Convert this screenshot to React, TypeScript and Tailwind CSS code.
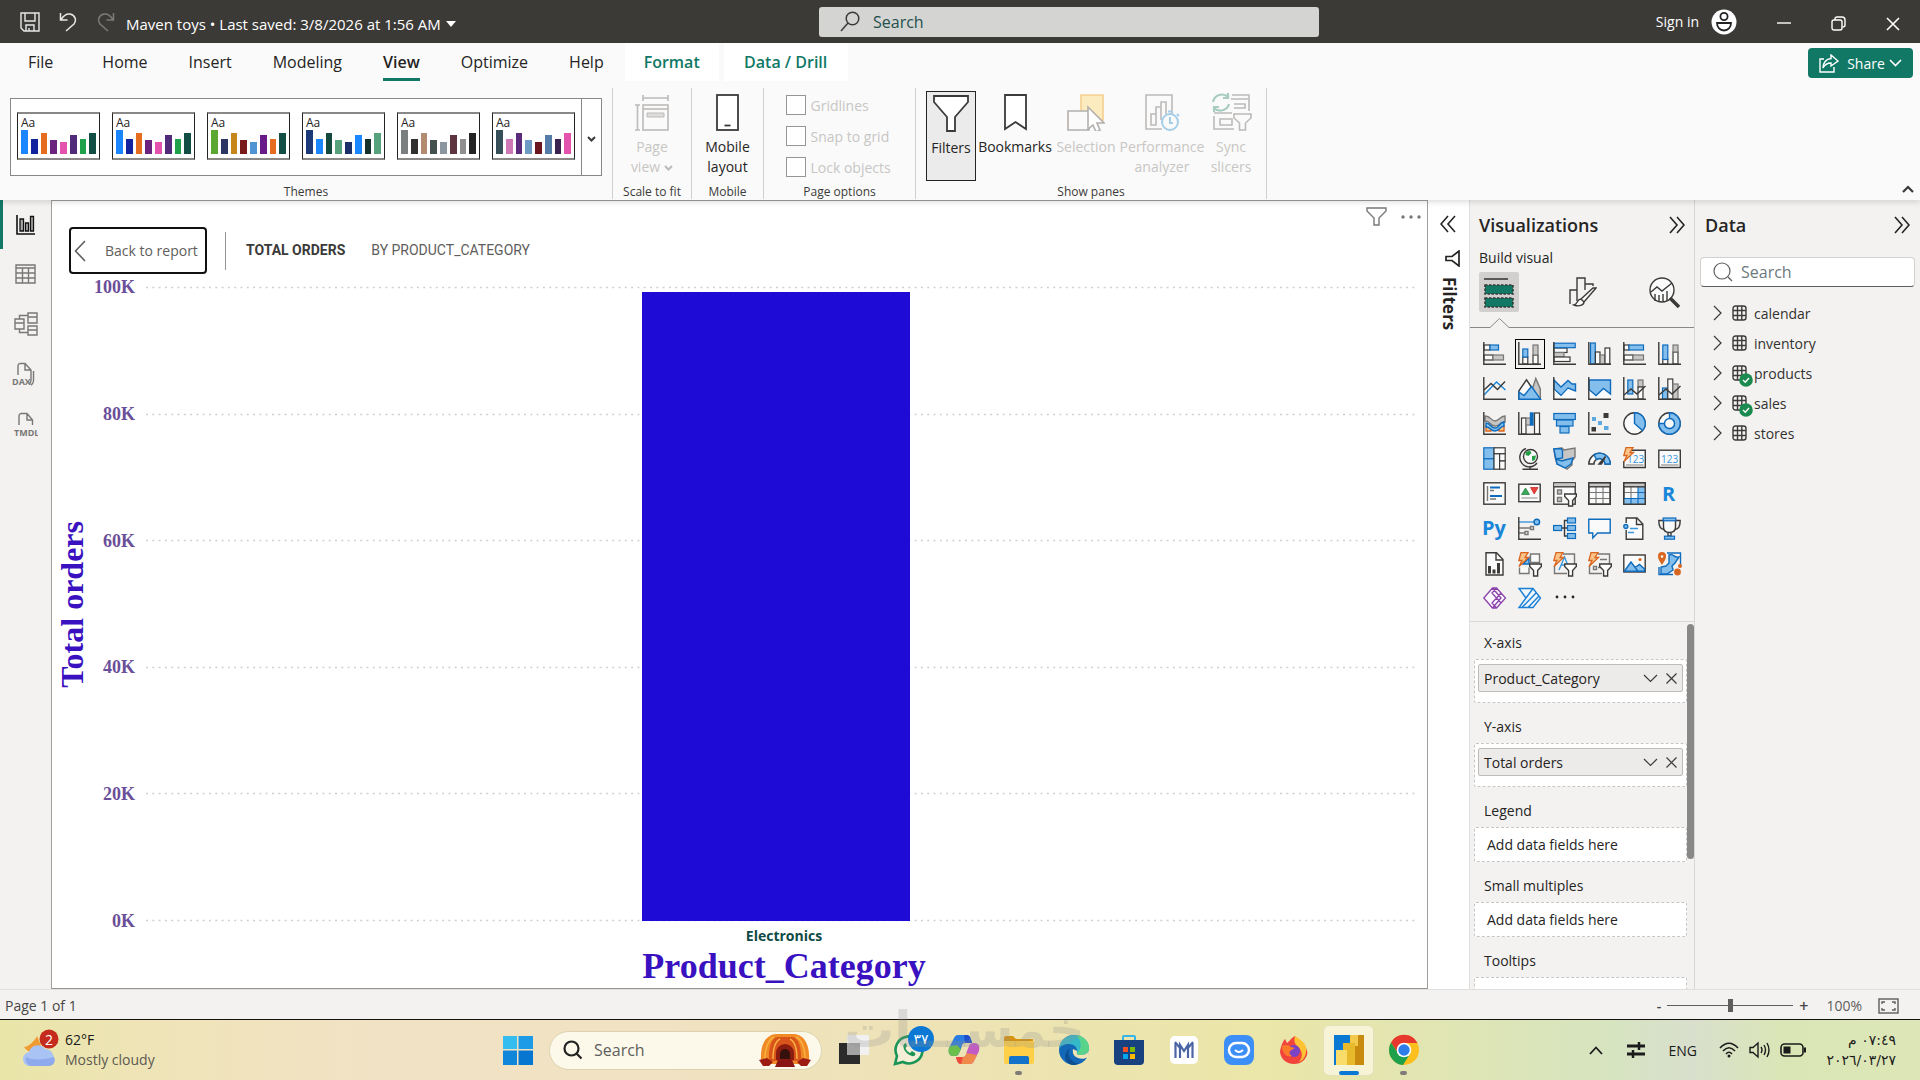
import { ReactNode } from "react";

const DARK = "#3b3a39";
const BLUE = "#0f6cbd";
const LIGHT = "#83beec";
const GRAY = "#797775";
const SILVER = "#c8c6c4";
const WHITE = "#fafafa";
const ORANGE = "#d9661f";

type SvgProps = {
  w?: number;
  h?: number;
  className?: string;
  color?: string;
  sw?: number;
  children: ReactNode;
};

function Svg({ w = 23, h = 23, className = "", color = DARK, sw = 1.4, children }: SvgProps) {
  return (
    <svg
      width={w}
      height={h}
      viewBox={`0 0 ${w} ${h}`}
      fill="none"
      stroke={color}
      strokeWidth={sw}
      className={`shrink-0 ${className}`}
      aria-hidden="true"
    >
      {children}
    </svg>
  );
}

// Small building blocks shared by the visual icons
const Axis = () => <path d="M.8 0V22.2H23" />;

const R = ({ x, y, w, h, c }: { x: number; y: number; w: number; h: number; c: "b" | "g" | "w" }) => (
  <rect
    x={x}
    y={y}
    width={w}
    height={h}
    fill={c === "b" ? LIGHT : c === "g" ? SILVER : WHITE}
    stroke={c === "b" ? BLUE : c === "g" ? GRAY : DARK}
    strokeWidth={1.2}
  />
);

const Bolt = () => (
  <path d="M3 .7H10L7 5.5H10.5L1 14.5L4 8.5H.8Z" fill="#fbc58a" stroke={ORANGE} strokeWidth={1.3} />
);

const MiniFunnel = () => (
  <path d="M11.7 12H23.3V14.5L19.6 18.5V24H15.6V18.5L11.7 14.5Z" fill="#fff" stroke={DARK} strokeWidth={1.4} />
);

const visuals: { name: string; icon: ReactNode }[] = [
  {
    name: "Stacked bar chart",
    icon: <><R x={1} y={3} w={6} h={5} c="w" /><R x={7} y={3} w={8.5} h={5} c="b" /><R x={1} y={13} w={9} h={5} c="w" /><R x={10} y={13} w={10.5} h={5} c="g" /><Axis /></>,
  },
  {
    name: "Stacked column chart",
    icon: <><R x={4.8} y={15} w={5} h={7} c="w" /><R x={4.8} y={7} w={5} h={8} c="b" /><R x={15} y={13} w={5} h={9} c="w" /><R x={15} y={3} w={5} h={10} c="g" /><Axis /></>,
  },
  {
    name: "Clustered bar chart",
    icon: <><R x={1} y={6} w={13} h={4.5} c="w" /><R x={1} y={10.5} w={10} h={4.5} c="g" /><R x={1} y={15} w={16} h={4.5} c="w" /><R x={1} y={1.2} w={21.2} h={4.5} c="b" /><Axis /></>,
  },
  {
    name: "Clustered column chart",
    icon: <><R x={2.5} y={1} w={4.8} h={21} c="b" /><R x={7.4} y={10} w={4.6} h={12} c="w" /><R x={12.2} y={13} w={4.6} h={9} c="g" /><R x={17} y={6} w={4.8} h={16} c="w" /><Axis /></>,
  },
  {
    name: "100% stacked bar chart",
    icon: <><R x={1} y={3} w={5} h={5} c="w" /><R x={6} y={3} w={14.5} h={5} c="b" /><R x={1} y={13} w={9} h={5} c="w" /><R x={10} y={13} w={10.5} h={5} c="g" /><Axis /></>,
  },
  {
    name: "100% stacked column chart",
    icon: <><R x={4.8} y={17} w={5} h={5} c="w" /><R x={4.8} y={3} w={5} h={14.5} c="b" /><R x={15} y={10} w={5} h={12} c="w" /><R x={15} y={3} w={5} h={7} c="g" /><Axis /></>,
  },
  {
    name: "Line chart",
    icon: <><path d="M1 18L13.5 5L22.5 13" stroke="#1a86d9" /><path d="M1 13L8 6.5L14.5 12.5L22 4.5" /><Axis /></>,
  },
  {
    name: "Area chart",
    icon: <><path d="M11 22L17.8 1.5L22.3 12V22Z" fill={SILVER} stroke={GRAY} /><path d="M.8 22V14L8.5 2.8L16 14V22Z" fill={WHITE} /><path d="M1 22.2V15L6 18.5L13.5 9.5L22.5 22.2Z" fill={LIGHT} stroke={BLUE} /></>,
  },
  {
    name: "Stacked area chart",
    icon: <><path d="M1 3L8 10L15 3.5L19 7H22.5V14L15 11L8 18.5L1 12Z" fill={LIGHT} stroke={BLUE} /><path d="M1 13L8 19.5L15 12L22.5 15.5V22H1Z" fill={WHITE} stroke="none" /><Axis /></>,
  },
  {
    name: "100% stacked area chart",
    icon: <><rect x="1" y="3" width="22" height="19" fill={WHITE} stroke="none" /><path d="M1 3H22.5V17L15.5 11.5L8 18.5L1 12.5Z" fill={LIGHT} stroke={BLUE} /><Axis /></>,
  },
  {
    name: "Line and stacked column chart",
    icon: <><R x={4.8} y={3} w={5} h={14} c="b" /><R x={15} y={3} w={5} h={7} c="g" /><R x={15} y={10} w={5} h={12} c="w" /><path d="M1 18L8 12L14 17L22.5 9" /><Axis /></>,
  },
  {
    name: "Line and clustered column chart",
    icon: <><R x={4.5} y={11} w={5} h={11} c="b" /><R x={9.8} y={2} w={5} h={20} c="w" /><R x={15} y={7} w={5} h={15} c="g" /><path d="M1 18L8 12L14 17L22.5 9" /><Axis /></>,
  },
  {
    name: "Ribbon chart",
    icon: <><path d="M2 4C8 4 8 9 12 9S17 4 22 4V10C17 10 17 14 12 14S8 9 2 9Z" fill={SILVER} stroke={GRAY} /><path d="M3 14H8V19H3ZM16 14H21V19H16Z" fill="#fbc58a" stroke={ORANGE} /><path d="M3 11C8 11 7 16 12 16S16 10 21 10V14C17 14 17 19 12 19S8 15 3 15Z" fill={LIGHT} stroke={BLUE} /><Axis /></>,
  },
  {
    name: "Waterfall chart",
    icon: <><R x={3.5} y={6} w={4.5} h={16} c="w" /><R x={8} y={6} w={4.5} h={7} c="g" /><rect x="12.5" y="1" width="2.5" height="12" fill={BLUE} stroke={BLUE} /><R x={16.5} y={1} w={5} h={21} c="w" /><Axis /></>,
  },
  {
    name: "Funnel chart",
    icon: <><R x={.8} y={1.5} w={21.5} h={6} c="b" /><R x={3.5} y={8} w={16.5} h={6} c="b" /><R x={7} y={14.5} w={9} h={6.5} c="b" /></>,
  },
  {
    name: "Scatter chart",
    icon: <><g stroke="none"><rect x="15.5" y="1" width="5" height="5" fill={DARK} /><rect x="3.5" y="15" width="4.5" height="4.5" fill={DARK} /><rect x="4" y="5" width="4" height="4" fill="#5ea9e0" /><rect x="10" y="9" width="4" height="4" fill="#5ea9e0" /><rect x="16" y="14" width="4.5" height="4" fill="#5ea9e0" /></g><Axis /></>,
  },
  {
    name: "Pie chart",
    icon: <><circle cx="11.5" cy="11.5" r="10.7" fill={WHITE} /><path d="M11.5 .8A10.7 10.7 0 0 1 19.5 18.6L11.5 11.5Z" fill={LIGHT} stroke={BLUE} /></>,
  },
  {
    name: "Donut chart",
    icon: <><circle cx="11.5" cy="11.5" r="10.7" fill={WHITE} /><path d="M11.5 .8A10.7 10.7 0 1 1 .8 11.5H6.5A5 5 0 1 0 11.5 6.5Z" fill={LIGHT} stroke={BLUE} /><circle cx="11.5" cy="11.5" r="5" fill={WHITE} stroke={BLUE} /></>,
  },
  {
    name: "Treemap",
    icon: <><R x={.8} y={.8} w={10.2} h={11} c="b" /><R x={.8} y={11.8} w={10.2} h={10.4} c="b" /><R x={11} y={.8} w={11.2} h={6} c="w" /><R x={11} y={6.8} w={5.6} h={15.4} c="w" /><R x={16.6} y={6.8} w={5.6} h={7.2} c="w" /><R x={16.6} y={14} w={5.6} h={8.2} c="w" /></>,
  },
  {
    name: "Map",
    icon: <><path d="M8 1.5A9.5 9.5 0 1 0 19 16M12 19V22M4.5 22.2H20" /><circle cx="12.5" cy="9.5" r="7" fill={WHITE} /><path d="M8 5L12 3.5L13.5 6L10.5 9L7.5 8ZM14 9L18 8.5L17 13L14 14Z" fill="#22a045" stroke="none" /></>,
  },
  {
    name: "Filled map",
    icon: <><path d="M.8 2L9 1L11 3L22 1V10L19 14V18L14 22L10 19L4 17L2 10Z" fill={SILVER} stroke={GRAY} /><path d="M.8 2L8 1.5L9.5 4V11L3 12Z" fill={LIGHT} stroke={BLUE} /><path d="M12 13L20 11L18 17L12 21L4 17L3 12L9 14Z" fill={LIGHT} stroke={BLUE} /></>,
  },
  {
    name: "Gauge",
    icon: <><path d="M.8 17A10.7 10.7 0 0 1 22.2 17H17A5.5 5.5 0 0 0 6 17Z" fill={WHITE} /><path d="M6 7.8A10.7 10.7 0 0 1 22.2 17H17A5.5 5.5 0 0 0 8.5 12.5Z" fill={LIGHT} stroke={BLUE} /><path d="M11 17L17.5 9.5L13.5 17Z" fill={DARK} /></>,
  },
  {
    name: "Card (new)",
    icon: <><path d="M8 3.2H22.3V20.5H.8V14" fill={WHITE} /><path d="M3 18H20.5" stroke="#bbb" strokeWidth="2" /><text x="4" y="15.5" fontSize="10" fill="#3a96dd" stroke="none" className="font-['Open_Sans',sans-serif]">123</text><Bolt /></>,
  },
  {
    name: "Card",
    icon: <><rect x=".8" y="3.2" width="21.5" height="17.3" fill={WHITE} /><path d="M3 18H20.5" stroke="#bbb" strokeWidth="2" /><text x="3" y="15.5" fontSize="10" fill="#3a96dd" stroke="none" className="font-['Open_Sans',sans-serif]">123</text></>,
  },
  {
    name: "Multi-row card",
    icon: <><rect x=".8" y=".8" width="21.4" height="21.4" fill={WHITE} /><path d="M4.5 4V19M7 8.5H11M7 17H13" stroke={GRAY} /><path d="M7 5.5H17M7 14H19" stroke={BLUE} strokeWidth="2" /></>,
  },
  {
    name: "KPI",
    icon: <><rect x=".8" y="2.2" width="21.4" height="17.5" fill={WHITE} /><path d="M3.5 12.5L7.5 6L11.5 12.5Z" fill="#3aa75a" stroke="#2a8547" strokeWidth=".8" /><path d="M12.5 5.5H20L16.2 12Z" fill="#e8403a" stroke="#c82d28" strokeWidth=".8" /><path d="M3.5 16H19.5" stroke="#aaa" /></>,
  },
  {
    name: "Slicer",
    icon: <><rect x=".8" y=".8" width="21.4" height="21.4" fill={WHITE} /><path d="M1 2.8H22" stroke={SILVER} strokeWidth="2.6" /><path d="M.8 4.8H22.2" /><path d="M4.5 8H8.5V12H4.5ZM4.5 15.5H8.5V19.5H4.5Z" fill={SILVER} stroke={GRAY} /><MiniFunnel /></>,
  },
  {
    name: "Table",
    icon: <><rect x=".8" y=".8" width="21.4" height="21.4" fill={WHITE} /><path d="M1 2.8H22" stroke={SILVER} strokeWidth="2.6" /><path d="M.8 10.5H22M.8 16.5H22M8 5V22M15 5V22" stroke={GRAY} strokeWidth="1.1" /><path d="M.8 4.8H22.2" /><rect x=".8" y=".8" width="21.4" height="21.4" /></>,
  },
  {
    name: "Matrix",
    icon: <><rect x=".8" y=".8" width="21.4" height="21.4" fill={WHITE} /><path d="M1 2.8H22" stroke={SILVER} strokeWidth="2.6" /><path d="M1 16.5H15V5H22V22H1Z" fill={LIGHT} stroke="none" /><path d="M.8 10.5H15M8 5V16.5" stroke={GRAY} strokeWidth="1.1" /><path d="M15 5V22M8 16.5V22M15 10.5H22M1 16.5H22" stroke={BLUE} strokeWidth="1.1" /><path d="M.8 4.8H22.2" /><rect x=".8" y=".8" width="21.4" height="21.4" /></>,
  },
  {
    name: "R script visual",
    icon: <text x="4" y="19" fontSize="20" fontWeight="700" fill="#1a86d9" stroke="none" className="font-['Open_Sans',sans-serif]">R</text>,
  },
  {
    name: "Python visual",
    icon: <text x="-1" y="17.5" fontSize="20" fontWeight="700" fill="#1a86d9" stroke="none" className="font-['Open_Sans',sans-serif]">Py</text>,
  },
  {
    name: "Key influencers",
    icon: <><path d="M1 5H16" stroke="#3a96dd" /><circle cx="18.8" cy="5" r="2.8" fill={LIGHT} stroke={BLUE} /><path d="M1 11H12M1 16H7M12.5 9.5H15.5V12.5H12.5ZM7 14.5H10V17.5H7Z" stroke={GRAY} /><Axis /></>,
  },
  {
    name: "Decomposition tree",
    icon: <><path d="M8 11H15M11.5 11V3.5H15M11.5 11V19H15" /><R x={.6} y={8.5} w={8} h={5} c="b" /><R x={14.5} y={1} w={8} h={5} c="b" /><R x={14.5} y={8.5} w={8} h={5} c="b" /><R x={14.5} y={16.5} w={8} h={5} c="b" /></>,
  },
  {
    name: "Q&A",
    icon: <path d="M.8 2.2H22.2V16H9.5L4.8 21V16H.8Z" fill={WHITE} stroke={BLUE} />,
  },
  {
    name: "Narrative",
    icon: <><path d="M3.2 6V1H14L19.8 7V22.2H3.2V13" fill={WHITE} /><path d="M13.5 1V7.5H19.8" /><path d="M7 11.5H15M5 15.5H11" stroke="#3a96dd" /><circle cx="2.8" cy="9.5" r="2" fill={LIGHT} stroke={BLUE} /></>,
  },
  {
    name: "Goals",
    icon: <><path d="M5 3.5H.8C.8 9 3 12.5 6.5 12.5M18 3.5H22.2C22.2 9 20 12.5 16.5 12.5" /><path d="M5.5 3V10C5.5 14 8 15.5 11.5 15.5S17.5 14 17.5 10V3Z" fill={WHITE} /><path d="M10 15.5V19H13V15.5" /><R x={5.2} y={1} w={12.6} h={2.8} c="b" /><R x={6.5} y={19.2} w={10} h={3} c="b" /></>,
  },
  {
    name: "Paginated report",
    icon: <><path d="M3 .8H13.5L20 7.5V23H3Z" fill={WHITE} /><path d="M13 1V8H20" /><path d="M5 21.5V14H8V21.5ZM9.5 21.5V17.5H12.5V21.5ZM14 21.5V11H17V21.5Z" fill={DARK} stroke="none" /></>,
  },
  {
    name: "Button slicer",
    icon: <><path d="M12.5 2H21.5V10.5H12.5ZM1.5 15.5V21.5H11V15.5" fill={WHITE} stroke={GRAY} /><path d="M5 12L11 6V12Z" fill={LIGHT} stroke={BLUE} /><Bolt /><MiniFunnel /></>,
  },
  {
    name: "Text slicer",
    icon: <><path d="M10 2H21.5V12M1.5 14V21.5H14" stroke={GRAY} /><path d="M6 18L11.5 5L16 16M8 13H14" stroke="#3a96dd" /><Bolt /><MiniFunnel /></>,
  },
  {
    name: "List slicer",
    icon: <><path d="M10 2H21.5V12M1.5 14V21.5H14" stroke={GRAY} /><path d="M12 7.5H19M10 15.5H13M5.5 14.5H8.5V17.5H5.5Z" stroke={GRAY} /><Bolt /><MiniFunnel /></>,
  },
  {
    name: "Image",
    icon: <><rect x=".8" y="3" width="21.4" height="17" fill={WHITE} /><path d="M1.5 19L8 10L15 19.3ZM12 15.5L16.5 12.5L21.5 17V19.3H15Z" fill={LIGHT} stroke={BLUE} /><circle cx="17" cy="7.5" r="1.6" fill={ORANGE} stroke="none" /></>,
  },
  {
    name: "Azure map",
    icon: <><path d="M9 1H22.5V13M1 15V22.5H15" stroke={BLUE} /><path d="M11 3C16 1 15 6 21 5L17 11L14 14L15 18L9 22H3V15L8 14L11 11Z" fill={LIGHT} stroke={BLUE} /><path d="M4 0A4 4 0 0 1 8 4C8 8 5 11 4 13C3 11 0 8 0 4A4 4 0 0 1 4 0Z" fill={ORANGE} stroke="none" /><circle cx="4" cy="4.5" r="1.3" fill="#fff" stroke="none" /><circle cx="19.5" cy="20" r="3.4" fill={ORANGE} stroke="none" /><circle cx="22" cy="14" r="2" fill={ORANGE} stroke="none" /></>,
  },
  {
    name: "Power Apps",
    icon: <path d="M9.5 1H13.5L22.5 11L13.5 21H9.5L.8 11ZM9.5 1L18 11L9.5 21M13.5 1L9 6L18 16M18 6L9 16L13.5 21" stroke="#8c42ab" strokeWidth="1.3" fill="#fbf6fd" />,
  },
  {
    name: "Power Automate",
    icon: <path d="M1 1.5H15L22.5 11L15 20.5H1L8 11ZM8 11L15 1.5M4 20.5L18.5 5.5M10 20.5L21 9" stroke="#1a7fd4" strokeWidth="1.4" fill="#eef6fd" />,
  },
];

const themes = [
  ["#1a86ff", "#12239e", "#e66c1f", "#6b2380", "#e352ad", "#512a7a", "#1fa04a", "#134e45"],
  ["#1a86ff", "#12239e", "#e66c1f", "#6b2380", "#e352ad", "#512a7a", "#1fa04a", "#134e45"],
  ["#5aa832", "#2c3564", "#c7861c", "#7a1b1b", "#4f95d4", "#6a1b8a", "#e66c1f", "#134e45"],
  ["#1c3a78", "#1a86ff", "#14493f", "#55a27c", "#1b2f6b", "#1a86ff", "#16312c", "#55a27c"],
  ["#7b7f7f", "#303030", "#b38b70", "#44504d", "#8a97a0", "#5d3440", "#8f8f8f", "#242424"],
  ["#364f59", "#cf78b6", "#5b2a7a", "#6d9bc4", "#6b151f", "#557ba8", "#3a2150", "#e352ad"],
];
const barHeights = [24, 15, 21, 14, 12, 19, 15, 21];

const ticks = ["100K", "80K", "60K", "40K", "20K", "0K"];

const tables = [
  { name: "calendar", used: false },
  { name: "inventory", used: false },
  { name: "products", used: true },
  { name: "sales", used: true },
  { name: "stores", used: false },
];

function DoubleChevron({ left = false }: { left?: boolean }) {
  return (
    <Svg w={17} h={18} color="#252423" sw={1.6}>
      <path d={left ? "M8 1L1 9L8 17M15 1L8 9L15 17" : "M2 1L9 9L2 17M9 1L16 9L9 17"} />
    </Svg>
  );
}

function TitleBar() {
  return (
    <header className="flex h-[43px] shrink-0 items-center bg-[#3b3a37] text-white">
      <div className="flex flex-[819] items-center">
        <button aria-label="Save" className="ml-5 mr-[19px]">
          <Svg w={20} h={20} color="#e8e8e8"><path d="M1 1H19V19H4L1 16ZM5 1V9H15V1M6 19V13H14V19M9 16V19" /></Svg>
        </button>
        <button aria-label="Undo" className="mr-5">
          <Svg w={18} h={20} color="#e8e8e8" sw={1.5}><path d="M1.5 1V8H8.5M2 7.5C5 3 8 1.5 11 2C16 3 18 8 15 12L7 19" /></Svg>
        </button>
        <button aria-label="Redo" className="mr-[11px]" disabled>
          <Svg w={18} h={20} color="#7c7b79" sw={1.5}><path d="M16.5 1V8H9.5M16 7.5C13 3 10 1.5 7 2C2 3 0 8 3 12L11 19" /></Svg>
        </button>
        <button className="flex items-center gap-1 whitespace-nowrap pt-[5px] text-[15px]">
          Maven toys • Last saved: 3/8/2026 at 1:56 AM
          <Svg w={12} h={7}><path d="M1 0H11L6 6Z" fill="#fff" stroke="none" /></Svg>
        </button>
      </div>
      <label className="flex h-[30px] w-[500px] items-center gap-3 rounded-[3px] bg-[#d4d4d2] pl-5">
        <Svg w={22} h={22} color={DARK} sw={1.5}><circle cx="13.5" cy="7.5" r="6.3" /><path d="M9 12L2 20" /></Svg>
        <input placeholder="Search" aria-label="Search" className="w-full bg-transparent text-[16px] outline-none placeholder:text-[#24504d]" />
      </label>
      <div className="flex flex-[601] items-center justify-end">
        <button className="flex items-center gap-3 text-[14px]">
          Sign in
          <Svg w={26} h={26} color="#222" sw={1.8}><circle cx="13" cy="13" r="12.5" fill="#fff" stroke="none" /><circle cx="13" cy="7.5" r="3.6" /><path d="M6 14H20C20 18.500 17 21.500 13 21.500S6 18.500 6 14Z" /></Svg>
        </button>
        <button aria-label="Minimize" className="ml-10"><Svg w={14} h={14} color="#fff"><path d="M0 8H14" /></Svg></button>
        <button aria-label="Restore" className="ml-10 pt-1"><Svg w={15} h={15} color="#fff"><rect x="1" y="4" width="10" height="10" rx="2" /><path d="M4 4V3Q4 1 6 1H11Q14 1 14 4V9Q14 11 11.500 11" /></Svg></button>
        <button aria-label="Close" className="ml-10 mr-5 pt-1"><Svg w={14} h={14} color="#fff" sw={1.6}><path d="M1 1L13 13M13 1L1 13" /></Svg></button>
      </div>
    </header>
  );
}

const tabs = ["Home", "Insert", "Modeling", "View", "Optimize", "Help"];

function TabRow() {
  return (
    <nav className="flex h-[45px] items-start gap-px text-[16px] text-[#252423]">
      <button className="ml-2 mr-2 h-[38px] px-5">File</button>
      {tabs.map((t) =>
        t === "View" ? (
          <button key={t} className="flex h-[38px] flex-col items-center px-5 font-semibold">
            <span className="box-content flex h-[35px] items-center border-b-[3px] border-[#117865] pt-[2px]">{t}</span>
          </button>
        ) : (
          <button key={t} className="h-[38px] px-5">{t}</button>
        )
      )}
      <button className="h-[38px] w-[94px] bg-white font-semibold text-[#117865]">Format</button>
      <button className="ml-1 h-[38px] w-[124px] bg-white font-semibold text-[#117865]">Data / Drill</button>
      <button className="ml-auto mr-[7px] mt-[5px] flex h-[30px] w-[105px] items-center justify-center gap-2 rounded-[4px] bg-[#117865] text-[14px] font-medium text-white">
        <Svg w={20} h={19} color="#fff"><path d="M5 5H1V18H15V13" /><path d="M12 1L19 7L12 12V9C8 9 6 10 4 14C4 9 7 5 12 4.500Z" /></Svg>
        <span className="flex items-center gap-1">Share<Svg w={13} h={8} color="#fff" sw={1.6}><path d="M1 1L6.500 6.500L12 1" /></Svg></span>
      </button>
    </nav>
  );
}

function Group({ label, className = "", children }: { label: string; className?: string; children: ReactNode }) {
  return (
    <section className={`flex h-[111px] flex-col border-r border-[#d2d0ce] ${className}`}>
      <div className="flex flex-1 justify-center">{children}</div>
      <h2 className="h-[16px] text-center text-[12px] leading-[18px] text-[#3b3a39]">{label}</h2>
    </section>
  );
}

function Tool({ label, icon, className, off = false }: { label: ReactNode; icon: ReactNode; className: string; off?: boolean }) {
  return (
    <button disabled={off} className={`flex h-[90px] flex-col items-center gap-[4px] text-[14px] leading-[20px] ${off ? "text-[#c8c6c4]" : "text-[#252423]"} ${className}`}>
      <span className="flex h-[42px] items-center">{icon}</span>
      <span className="text-center">{label}</span>
    </button>
  );
}

function Ribbon() {
  return (
    <div className="relative z-10 flex h-[157px] shrink-0 flex-col bg-[#fafafa] shadow-[0_2px_6px_rgba(0,0,0,0.14)]">
      <TabRow />
      <div className="flex">
        <Group label="Themes" className="w-[613px]">
          <div className="mt-[10px] flex h-[78px] w-[592px] border border-[#8a8886] bg-white">
            <div className="flex flex-1 gap-3 pl-[6px] pt-[13px]">
              {themes.map((colors, i) => (
                <button key={i} aria-label={`Theme ${i + 1}`} className="flex h-[48px] w-[83px] flex-col justify-between border border-y-2 border-[#252423] border-y-[#8a8886] px-[3px] pb-1 text-left">
                  <span className="h-[16px] text-[12px] leading-[17px] text-[#252423]">Aa</span>
                  <span className="flex items-end gap-[3px]">
                    {colors.map((c, j) => (
                      <span key={j} className="w-[7px]" style={{ background: c, height: barHeights[j] }} />
                    ))}
                  </span>
                </button>
              ))}
            </div>
            <button aria-label="More themes" className="flex w-[20px] items-center justify-center border-l border-[#8a8886] pt-1">
              <Svg w={9} h={6} sw={2}><path d="M1 1L4.500 4.500L8 1" /></Svg>
            </button>
          </div>
        </Group>
        <Group label="Scale to fit" className="w-[79px]">
          <Tool
            off
            className="mt-[3px] w-[60px]"
            icon={<Svg w={36} h={37} color="#bdbbb9" sw={1.6}><path d="M9 1V7M34 1V7M9 4H34M1 11H6M1 36H6M3.500 11V36" /><rect x="9" y="11" width="25" height="25" /><path d="M9 15H34" /><path d="M13 19H30V23H13Z" fill="#dedcda" strokeWidth="1" /></Svg>}
            label={<>Page<br />view<Svg w={9} h={6} sw={2} color="#bdbbb9" className="ml-1 inline"><path d="M1 1L4.500 4.500L8 1" /></Svg></>}
          />
        </Group>
        <Group label="Mobile" className="w-[72px]">
          <Tool
            className="mt-[3px] w-[60px]"
            icon={<Svg w={23} h={37} sw={1.8}><rect x="1" y="1" width="21" height="35" fill="#fff" /><path d="M8.500 31.500H14.500" /></Svg>}
            label={<>Mobile<br />layout</>}
          />
        </Group>
        <Group label="Page options" className="w-[152px]">
          <div className="flex w-[108px] flex-col gap-[11px] pt-[7px] text-[14px] text-[#c8c6c4]">
            {["Gridlines", "Snap to grid", "Lock objects"].map((t) => (
              <label key={t} className="flex h-5 items-center gap-[5px] whitespace-nowrap">
                <input type="checkbox" disabled className="h-5 w-5 shrink-0 appearance-none border border-[#979593] bg-white" />
                {t}
              </label>
            ))}
          </div>
        </Group>
        <Group label="Show panes" className="w-[351px]">
          <div className="flex pt-[3px]">
            <Tool className="w-[50px] border border-[#252423] bg-[#ebebeb]" icon={<Svg w={36} h={37} sw={1.8}><path d="M1 1H35V7L22 22V36H14V22L1 7Z" fill="#fff" /></Svg>} label="Filters" />
            <Tool className="w-[78px]" icon={<Svg w={23} h={37} sw={1.8}><path d="M1 1H22V35L11.500 28L1 35Z" fill="#fff" /></Svg>} label="Bookmarks" />
            <Tool
              off
              className="w-[64px]"
              icon={<Svg w={38} h={37} color="#b3b0ad" sw={1.6}><path d="M14 1H36V26H14Z" fill="#fdebc0" stroke="#f5d08f" /><path d="M1 17H22V36H1Z" fill="#fafafa" /><path d="M21 13L37 29H30L33 36L29 38L26 31L21 35Z" fill="#fff" /></Svg>}
              label="Selection"
            />
            <Tool
              off
              className="w-[88px]"
              icon={<Svg w={36} h={37} color="#bdbbb9" sw={1.6}><path d="M28 20V1H2V35H18M7 31V20H12V31ZM12 20V13H17V8H22V20M17 13V26" /><circle cx="26" cy="28" r="8" fill="#fafafa" stroke="#a5cdea" strokeWidth="2" /><path d="M26 23V29H29M24 17.500H28M33 20L35 22" stroke="#a5cdea" strokeWidth="2" /></Svg>}
              label={<>Performance<br />analyzer</>}
            />
            <Tool
              off
              className="w-[50px]"
              icon={<Svg w={42} h={40} color="#bdbbb9" sw={1.6}><path d="M22 3H39V19M21 7H39M4 24V37H24M10 27H22V33H10ZM4 21H22M24 12H35V16H24" /><path d="M24 22H41V26L35.500 31V38H29.500V31L24 26Z" fill="#fafafa" /><path d="M3 10A9 9 0 0 1 18 5V1M18 6H13M19 12A9 9 0 0 1 4 16V20M4 15H9" stroke="#a8cdbf" strokeWidth="2.200" /></Svg>}
              label={<>Sync<br />slicers</>}
            />
          </div>
        </Group>
        <button aria-label="Collapse ribbon" className="mb-[6px] ml-auto mr-[6px] self-end">
          <Svg w={12} h={8} sw={2.2}><path d="M1 7L6 2L11 7" /></Svg>
        </button>
      </div>
    </div>
  );
}

function Rail() {
  return (
    <nav className="flex w-[51px] shrink-0 flex-col bg-[#f3f2f1]">
      <button aria-label="Report view" className="flex h-[49px] items-center justify-center border-l-[3px] border-[#117865] pr-1">
        <Svg w={19} h={20} color="#111" sw={1.6}><path d="M1 0V19H19" /><path d="M4 4H7.500V16H4ZM9.500 8H12.500V16H9.500ZM14.500 1.500H17.500V16H14.500Z" fill="#aaa" strokeWidth="1.300" /></Svg>
      </button>
      <button aria-label="Table view" className="flex h-[50px] items-center justify-center">
        <Svg w={21} h={20} color={GRAY}><path d="M1 1H20V19H1ZM1 4H20M1 9H20M1 14H20M7.500 4V19M13.500 4V19" /></Svg>
      </button>
      <button aria-label="Model view" className="flex h-[50px] items-center justify-center">
        <Svg w={24} h={24} color={GRAY}><path d="M1 7H10V17H1ZM1 11H10M14 1H23V11H14ZM14 5H23M14 14H23V23H14ZM14 18H23M5.500 7V3.500H14M5.500 17V20.500H14" /></Svg>
      </button>
      <button aria-label="DAX query view" className="flex h-[50px] items-center justify-center pr-1">
        <Svg w={24} h={24} color={GRAY}><path d="M6 13V4Q6 1.500 8.500 1.500H13L19 8V18Q19 21 17 22M13 1.500V8H19M21.500 9V19Q21 22 19 23" /><text x="0" y="22.500" fontSize="9" fontWeight="700" fill={GRAY} stroke="none" className="font-['Open_Sans',sans-serif]">DAX</text></Svg>
      </button>
      <button aria-label="TMDL view" className="flex h-[50px] items-center justify-center">
        <Svg w={24} h={24} color={GRAY}><path d="M5 13V4Q5 1.500 7.500 1.500H13L18.500 8V13M13 1.500V8H18.500" /><text x="0" y="23.500" fontSize="9" fontWeight="700" fill={GRAY} stroke="none" className="font-['Open_Sans',sans-serif]">TMDL</text></Svg>
      </button>
    </nav>
  );
}

function ReportCanvas() {
  return (
    <main className="relative flex min-w-0 flex-1 flex-col border border-[#a19f9d] border-b-[#979593] bg-white">
      <div className="absolute right-[6px] top-[6px] flex items-center gap-[14px]">
        <button aria-label="Filters on this visual"><Svg w={21} h={19} color={GRAY}><path d="M1 1H20V4L13 11V18H8V11L1 4Z" /></Svg></button>
        <button aria-label="More options"><Svg w={20} h={4}><g fill={GRAY} stroke="none"><circle cx="2" cy="2" r="1.700" /><circle cx="10" cy="2" r="1.700" /><circle cx="18" cy="2" r="1.700" /></g></Svg></button>
      </div>
      <div className="ml-[17px] mt-[26px] flex h-[47px] items-center">
        <button className="flex h-[47px] w-[138px] items-center gap-[19px] rounded-[4px] border-2 border-[#111] pl-[3px] text-[14px] text-[#605e5c]">
          <Svg w={12} h={22} color="#605e5c" sw={1.6}><path d="M11 1L1.500 11L11 21" /></Svg>
          Back to report
        </button>
        <span className="ml-[18px] h-[38px] w-px bg-[#979593]" />
        <h1 className="ml-5 font-['Roboto',sans-serif] text-[14px] font-bold text-[#3b3a39]">TOTAL ORDERS</h1>
        <span className="ml-[26px] font-['Roboto',sans-serif] text-[14px] text-[#605e5c]">BY PRODUCT_CATEGORY</span>
      </div>
      <div className="mr-[9px] mt-[7px] flex min-h-0 flex-1">
        <div className="flex w-[40px] items-center justify-center">
          <span className="rotate-180 whitespace-nowrap font-['Liberation_Serif',serif] text-[32px] font-bold leading-[34px] text-[#3a11c0] [writing-mode:vertical-rl]">Total orders</span>
        </div>
        <ul className="flex w-[43px] flex-col justify-between text-right font-['Liberation_Serif',serif] text-[18px] font-bold leading-[12px] text-[#6b4f99]">
          {ticks.map((t) => <li key={t}>{t}</li>)}
        </ul>
        <div className="relative my-[6px] ml-[11px] flex flex-1 flex-col justify-between">
          {ticks.map((t) => (
            <svg key={t} className="block h-px w-full overflow-visible" aria-hidden="true">
              <line x1="0" x2="100%" y1="0.5" y2="0.5" stroke="#d0d0d0" strokeWidth="1.500" strokeDasharray="2 4.300" />
            </svg>
          ))}
          <div className="absolute bottom-0 left-[39%] top-[5px] w-[21.1%] bg-[#1f0bd6]" />
        </div>
      </div>
      <div className="mr-[6px] pb-[5px] pl-[95px] text-center">
        <div className="h-[17px] text-[14px] font-bold leading-[18px] text-[#0f4a46]">Electronics</div>
        <div className="pt-[6px] font-['Liberation_Serif',serif] text-[36px] font-bold leading-[33px] text-[#3a11c0]">Product_Category</div>
      </div>
    </main>
  );
}

function FiltersStrip() {
  return (
    <aside className="flex w-[41px] shrink-0 flex-col items-center bg-white pt-[15px]">
      <button aria-label="Expand filters"><DoubleChevron left /></button>
      <Svg w={16} h={17} color="#252423" sw={1.7} className="ml-[6px] mt-[17px]"><path d="M15 1V16L8 10.500H2V6.500H8Z" /></Svg>
      <span className="mt-[10px] text-[17px] font-bold leading-[24px] text-[#252423] [writing-mode:vertical-rl]">Filters</span>
    </aside>
  );
}

function Well({ label, field, hint }: { label: string; field?: string; hint?: string }) {
  return (
    <div className="mb-[8px]">
      <h3 className="h-[32px] pl-[10px] text-[14px] leading-[32px] text-[#252423]">{label}</h3>
      {field ? (
        <div className="h-[44px] rounded-[2px] border border-dashed border-[#c8c6c4] bg-white px-[3px] pt-[4px]">
          <div className="flex h-[28px] items-center rounded-[2px] border border-[#bebbb8] bg-[#edebe9] pl-[5px] text-[14px] text-[#252423]">
            <span className="flex-1">{field}</span>
            <button aria-label={`${field} options`} className="mr-2"><Svg w={15} h={9} sw={1.2}><path d="M1 1L7.500 7.500L14 1" /></Svg></button>
            <button aria-label={`Remove ${field}`} className="mr-[5px]"><Svg w={11} h={11} sw={1.2}><path d="M.5 .5L10.500 10.500M10.500 .5L.5 10.500" /></Svg></button>
          </div>
        </div>
      ) : (
        <div className="flex h-[35px] items-center rounded-[2px] border border-dashed border-[#c8c6c4] bg-white pl-[12px] text-[14px] text-[#252423]">{hint}</div>
      )}
    </div>
  );
}

function VisualizationsPane() {
  return (
    <aside className="flex w-[225px] shrink-0 flex-col border-l border-[#e1dfdd] bg-[#f3f2f1]">
      <div className="flex items-center justify-between pl-[9px] pr-[9px] pt-[10px]">
        <h2 className="text-[18px] font-semibold leading-[30px] text-[#252423]">Visualizations</h2>
        <button aria-label="Collapse visualizations"><DoubleChevron /></button>
      </div>
      <h3 className="mt-[7px] pl-[9px] text-[14px] font-medium leading-[22px] text-[#252423]">Build visual</h3>
      <div className="mt-[3px] flex h-[40px] items-center pl-[9px]">
        <button aria-label="Build visual" className="flex h-[40px] w-[40px] items-center justify-center rounded-[2px] bg-[#d2d0ce]">
          <Svg w={30} h={31} sw={1.6}><path d="M0 2H24" /><g fill="#117865" strokeDasharray="2.500 1.500"><rect x="1" y="8" width="28" height="9" /><rect x="1" y="21" width="28" height="9" /></g></Svg>
        </button>
        <button aria-label="Format visual" className="ml-[50px]">
          <Svg w={28} h={30}><path d="M1 27V13H8M8 24V1H16V13M16 7H24V9M8 13V9" /><path d="M27 11L15 25L12 22L24 11ZM12 22C8 22 9 27 5 28C10 30 15 28 15 25" fill="#fafafa" /></Svg>
        </button>
        <button aria-label="Analytics" className="ml-[52px]">
          <Svg w={31} h={31}><circle cx="13" cy="13" r="12" fill="#fafafa" /><path d="M2 15L8 10L13 14L23 6M6 24V17M10 25V18M14 25V17M18 24V14" /><path d="M21 21L30 30" strokeWidth="3.500" /></Svg>
        </button>
      </div>
      <svg className="mt-[6px] h-[10px] w-full shrink-0" aria-hidden="true" fill="none" stroke="#8a8886">
        <path d="M0 9.500H20L29.500 .5L39 9.500H400" />
      </svg>
      <div className="grid auto-rows-[35px] grid-cols-[repeat(6,35px)] pl-[7px] pt-[8px]">
        {visuals.map((v) => (
          <button key={v.name} title={v.name} className="flex items-center justify-center">
            <span className={v.name === "Stacked column chart" ? "flex h-[30px] w-[30px] items-center justify-center border border-black" : "flex"}>
              <Svg className="overflow-visible">{v.icon}</Svg>
            </span>
          </button>
        ))}
        <button aria-label="Get more visuals" className="flex items-center justify-center pb-1">
          <Svg w={20} h={4}><g fill="#252423" stroke="none"><circle cx="2" cy="2" r="1.400" /><circle cx="10" cy="2" r="1.400" /><circle cx="18" cy="2" r="1.400" /></g></Svg>
        </button>
      </div>
      <div className="mt-[5px] flex min-h-0 flex-1 overflow-hidden border-t border-[#d9d7d5]">
        <div className="flex-1 pl-[4px] pt-[5px]">
          <Well label="X-axis" field="Product_Category" />
          <Well label="Y-axis" field="Total orders" />
          <Well label="Legend" hint="Add data fields here" />
          <Well label="Small multiples" hint="Add data fields here" />
          <Well label="Tooltips" />
        </div>
        <div className="mt-[2px] h-[235px] w-[7px] rounded-full bg-[#888886]" />
      </div>
    </aside>
  );
}

function DataPane() {
  return (
    <aside className="w-[226px] shrink-0 border-l border-[#d9d7d5] bg-[#f3f2f1]">
      <div className="flex items-center justify-between pl-[10px] pr-[10px] pt-[10px]">
        <h2 className="text-[18px] font-semibold leading-[30px] text-[#252423]">Data</h2>
        <button aria-label="Collapse data"><DoubleChevron /></button>
      </div>
      <label className="mx-[5px] mt-[17px] flex h-[30px] items-center gap-2 rounded-[4px] border border-[#d1d1d1] border-b-[#605e5c] bg-white pl-3">
        <Svg w={20} h={20} color="#605e5c" sw={1.2}><circle cx="9" cy="9" r="8" /><path d="M15 15L19 19" /></Svg>
        <input placeholder="Search" aria-label="Search data" className="w-full bg-transparent text-[16px] outline-none placeholder:text-[#6c7a7d]" />
      </label>
      <ul className="mt-[11px] text-[14px] text-[#323130]">
        {tables.map((t) => (
          <li key={t.name}>
            <button className="flex h-[30px] w-full items-center pl-[18px]">
              <Svg w={9} h={16} sw={1.2}><path d="M1 1L8 8L1 15" /></Svg>
              <span className="relative ml-[10px] mr-[7px]">
                <Svg w={15} h={16}><rect x="1" y="1" width="13" height="14" rx="2.500" /><path d="M1 5.500H14M1 10.500H14M5.500 1V15M9.800 1V15" /></Svg>
                {t.used && (
                  <Svg w={14} h={14} className="absolute -right-[6px] top-[8px]"><circle cx="7" cy="7" r="6.800" fill="#1a8a4f" stroke="none" /><path d="M4 7L6.300 9.300L10 5" stroke="#fff" /></Svg>
                )}
              </span>
              {t.name}
            </button>
          </li>
        ))}
      </ul>
    </aside>
  );
}

function StatusBar() {
  return (
    <footer className="flex h-[30px] shrink-0 items-center border-t border-[#e1dfdd] bg-[#f3f2f1] pl-[5px] pr-[21px] pt-[2px] text-[14px] text-[#484644]">
      Page 1 of 1
      <button aria-label="Zoom out" className="ml-auto font-semibold">-</button>
      <div className="mx-[6px] flex h-5 w-[126px] items-center">
        <input type="range" aria-label="Zoom" defaultValue={50} className="h-[1px] w-full appearance-none bg-[#605e5c] [&::-webkit-slider-thumb]:h-[13px] [&::-webkit-slider-thumb]:w-[5px] [&::-webkit-slider-thumb]:appearance-none [&::-webkit-slider-thumb]:bg-[#605e5c]" />
      </div>
      <button aria-label="Zoom in" className="text-[16px] font-semibold">+</button>
      <span className="ml-[18px] text-[#605e5c]">100%</span>
      <button aria-label="Fit to page" className="ml-4">
        <Svg w={21} h={16} color="#605e5c"><rect x="1" y="1" width="19" height="14" /><path d="M4 6V4H7M14 4H17V6M17 10V12H14M7 12H4V10" /></Svg>
      </button>
    </footer>
  );
}

const apps: { name: string; icon: ReactNode; dot?: boolean; active?: boolean }[] = [
  {
    name: "Task view",
    icon: <><path d="M1 9H22V30H1Z" fill="#2b2b2b" /><path d="M9 1H31V21H9Z" fill="#f1f1f1" /><path d="M9 9H22V21H9Z" fill="#a3a3a3" /></>,
  },
  {
    name: "WhatsApp",
    icon: <><path d="M2 30L4 22A13.500 13.500 0 1 1 10 28Z" fill="#f4efd6" stroke="#1b9457" strokeWidth="2.600" /><path d="M11 10C9 13 12 20 19 22C22 23 23 20 22 19L19 17L17 19C15 18 13 16 12.500 14L14 12L13 9Z" fill="#1b9457" /><circle cx="28" cy="5" r="13" fill="#0a78d4" /><text x="28" y="10" fontSize="14" textAnchor="middle" fill="#fff" className="font-['DejaVu_Sans',sans-serif]">٣٧</text></>,
  },
  {
    name: "Copilot",
    icon: <><path d="M10 1H19C22 1 23 5 24 9H17C14 9 14 12 13 15L11 19C10 22 8 22 5 22C1 22 0 18 1 14L6 4C7 2 8 1 10 1Z" fill="#2a7de0" /><path d="M16 1H19C22 1 23 5 24 9H17Z" fill="#1b4fd0" /><path d="M2 12L9 11L13 15L11 19C10 22 8 22 5 22C1 22 0 18 1 14Z" fill="#6cbf4b" /><path d="M22 30H13C10 30 9 27 8 23H15C18 23 18 20 19 17L21 12C22 9 24 9 27 9C31 9 32 13 31 17L26 27C25 29 24 30 22 30Z" fill="#c25cc4" /><path d="M8 23H15C17 23 18 21 18.500 19L29 21L26 27C25 29 24 30 22 30H13C10 30 9 27 8 23Z" fill="#f08a4c" /><path d="M8 23H15L13 30C10 30 9 27 8 23Z" fill="#ee4b3c" /></>,
  },
  {
    name: "File Explorer",
    dot: true,
    icon: <><path d="M1 4Q1 2 3 2H10L13 5H30V12H1Z" fill="#d9920f" /><path d="M1 7H31V28Q31 30 29 30H3Q1 30 1 28Z" fill="#ffcf48" /><path d="M6 30V24Q6 22 8 22H24Q26 22 26 24V30Z" fill="#1273c8" /></>,
  },
  {
    name: "Edge",
    icon: <><circle cx="16" cy="16" r="15" fill="#1368b8" /><path d="M1 15C2 6 9 1 16 1C25 1 31 7 31 14C31 19 27 21 22 21C18 21 19 19 19 17C19 13 16 10 11 10C6 10 2 12 1 15Z" fill="#35b8c8" /><path d="M18 1C26 2 31 8 31 14C31 19 27 21 22 21C20 21 19 20 19 19C24 16 24 6 18 1Z" fill="#5ad38a" /><path d="M15 15C13 24 24 27 30 23C31 20 31 18 31 16C30 20 26 21 22 21C18 21 19 19 19 17Z" fill="#f1e5b5" /><path d="M12 14C8 20 13 29 21 29.500C19 30.500 16 31 14 31C7 29 4 20 12 14Z" fill="#0d4f92" /></>,
  },
  {
    name: "Microsoft Store",
    icon: <><path d="M10 7V3Q10 2 11 2H21Q22 2 22 3V7" fill="none" stroke="#35b5e8" strokeWidth="2" /><path d="M1 6H31V27Q31 31 27 31H5Q1 31 1 27Z" fill="#17427f" /><path d="M10 13H15V18H10Z" fill="#f25022" /><path d="M17 13H22V18H17Z" fill="#7fba00" /><path d="M10 20H15V25H10Z" fill="#00a4ef" /><path d="M17 20H22V25H17Z" fill="#ffb900" /></>,
  },
  {
    name: "Markets",
    icon: <><rect x="2" y="2" width="28" height="28" rx="5" fill="#fff" /><path d="M7.500 24V9M24.500 24V9M12 24V11L16 17L20 11V24" fill="none" stroke="#4a64a4" strokeWidth="2.200" /><path d="M7 8L12 14M25 8L20 14" stroke="#4a64a4" strokeWidth="2" /></>,
  },
  {
    name: "Zoom",
    icon: <><rect x="1" y="1" width="30" height="30" rx="8" fill="#3c8ff7" /><rect x="6" y="9" width="20" height="14" rx="7" fill="none" stroke="#fff" strokeWidth="2.500" /><path d="M12 16Q16 20 20 16" fill="none" stroke="#fff" strokeWidth="1.800" /></>,
  },
  {
    name: "Firefox",
    icon: <><path d="M3 13C4 9 6 6 7 5L9 9C12 7 13 4 17 2C18 7 23 7 26 11C29 15 30 18 29 21C27 27 22 30 16 30C8 30 2 24 2 17Z" fill="#f0443c" /><path d="M17 2C20 4 27 8 28 13C29 18 27 26 21 28C26 22 24 16 19 12C16 9 16 5 17 2Z" fill="#ffc233" /><circle cx="16" cy="17" r="6" fill="#7a42c4" /><path d="M4 12C7 10 11 11 13 13L17 14L12 17C11 19 12 21 14 22C9 24 4 19 4 12Z" fill="#fb7a2a" /></>,
  },
  {
    name: "Power BI",
    active: true,
    icon: <><path d="M1 1H31V31H1Z" fill="#0b78d4" /><path d="M20 1H31V31H20Z" fill="#c98a10" /><path d="M17 1H25V12H17Z" fill="#f2c94a" /><path d="M10 9H22V31H10Z" fill="#e9b92c" /><path d="M3 16H14V31H3Z" fill="#f9dc6a" /></>,
  },
  {
    name: "Chrome",
    dot: true,
    icon: <><circle cx="16" cy="16" r="15" fill="#fbbf1e" /><path d="M3 8.500A15 15 0 0 1 29.500 9H16L10 19Z" fill="#e8372c" /><path d="M3 8.500A15 15 0 0 0 15 31L22 20L10 19Z" fill="#1fa04a" /><circle cx="16" cy="16" r="7.300" fill="#fff" /><circle cx="16" cy="16" r="5.700" fill="#2f7de9" /></>,
  },
];

function Taskbar() {
  return (
    <div className="relative flex h-[61px] shrink-0 items-center border-t border-[#14140f] bg-[linear-gradient(90deg,#e9e5a8_0%,#efe4b8_8%,#f1e2c5_20%,#f0e2c2_35%,#ede3b4_50%,#ebe6a9_66%,#dfe5b4_76%,#d6e4c0_84%,#d9dfcd_88%,#dbe6b6_93%,#dce6b6_100%)]">
      <button className="flex w-[503px] items-center pl-[24px] text-left text-[14px] leading-[20px]">
        <Svg w={41} h={40} className="overflow-visible"><g stroke="none"><path d="M13 6C10 12 4 17 0 17C4 24 14 24 18 18Z" fill="#f09a32" /><path d="M7 36A7 7 0 0 1 5 22A9 9 0 0 1 21 19A9 9 0 0 1 25 36Z" fill="#a9c3f5" /><path d="M7 36A7 7 0 0 1 2 27Q12 32 30 27A6 6 0 0 1 25 36Z" fill="#8ea9ec" /><circle cx="25" cy="9" r="9.500" fill="#c42b1c" /><text x="25" y="14.500" fontSize="14" textAnchor="middle" fill="#fff" className="font-['Open_Sans',sans-serif]">2</text></g></Svg>
        <span>
          <span className="block text-[#1b1b1b]">62°F</span>
          <span className="block text-[#5c5a50]">Mostly cloudy</span>
        </span>
      </button>
      <button aria-label="Start">
        <Svg w={30} h={30}><g stroke="none"><path d="M0 1H14V14H0Z" fill="#36bdf0" /><path d="M15.500 1H30V14H15.500Z" fill="#1d9be6" /><path d="M0 15.500H14V30H0Z" fill="#0f86da" /><path d="M15.500 15.500H30V30H15.500Z" fill="#0676d0" /></g></Svg>
      </button>
      <label className="ml-4 mr-[4px] flex h-[39px] w-[273px] items-center rounded-full border border-[#dcd3ae] bg-[#fcf9ea] pl-[13px] pr-[10px]">
        <Svg w={20} h={20} sw={2.2} color="#222"><circle cx="8.500" cy="8.500" r="7" /><path d="M13.500 13.500L18.500 18.500" /></Svg>
        <input placeholder="Search" aria-label="Search Windows" className="ml-[11px] w-[120px] bg-transparent text-[16px] outline-none placeholder:text-[#605e5c]" />
        <Svg w={52} h={34} className="ml-auto"><g stroke="none"><path d="M2 27C1 10 8 1 18 1H34C44 1 51 10 50 27L40 31H12Z" fill="#f08a24" /><path d="M10 28C9 14 13 5 18 4H34C39 5 43 14 42 28Z" fill="#d9541a" /><path d="M6 26C6 14 10 6 15 4M46 26C46 14 42 6 37 4M14 26C14 14 17 8 21 6M38 26C38 14 35 8 31 6" fill="none" stroke="#f9b142" strokeWidth="1.500" /><path d="M17 27V20A9 9 0 0 1 35 20V27Z" fill="#8a1d10" /><path d="M21 26V21A5 5 0 0 1 31 21V26Z" fill="#35100c" /><path d="M0 27L8 25L14 29L10 33H4ZM52 27L44 25L38 29L42 33H48Z" fill="#9c1c14" /><path d="M19 27H33L36 34H16Z" fill="#8a1414" /></g></Svg>
      </label>
      <div className="flex">
        {apps.map((a) => (
          <button key={a.name} aria-label={a.name} className={`relative mx-[3px] flex h-[49px] w-[49px] items-center justify-center rounded-[5px] ${a.active ? "bg-[#f6f3d6] ring-1 ring-[#e4e0b8]" : ""}`}>
            <Svg w={32} h={32} className="overflow-visible"><g stroke="none">{a.icon}</g></Svg>
            {a.dot && <span className="absolute bottom-0 h-[4px] w-[7px] rounded-full bg-[#7f7c78]" />}
            {a.active && <span className="absolute bottom-0 h-[4px] w-[20px] rounded-full bg-[#0a78d4]" />}
          </button>
        ))}
      </div>
      <div className="ml-auto flex items-center pr-[24px] text-[#1b1b1b]">
        <button aria-label="Hidden icons"><Svg w={14} h={9} color="#1b1b1b" sw={1.8}><path d="M1 8L7 1.500L13 8" /></Svg></button>
        <button aria-label="Quick toggles" className="ml-6"><Svg w={18} h={16} color="#1b1b1b" sw={3}><path d="M0 4H18M0 12H18" /><path d="M12 0V8M6 8V16" strokeWidth="2.500" /></Svg></button>
        <button className="ml-[24px] text-[14px]">ENG</button>
        <button className="ml-[22px] flex items-center gap-[10px]" aria-label="Network, volume and battery">
          <Svg w={20} h={16} color="#1b1b1b" sw={1.6}><path d="M1 6Q10 -3.500 19 6M4 9Q10 2.500 16 9M7 12Q10 8.500 13 12" /><circle cx="10" cy="14" r="1.500" fill="#1b1b1b" stroke="none" /></Svg>
          <Svg w={21} h={18} color="#1b1b1b"><path d="M1 6.500H4L9 2V16L4 11.500H1ZM12 6Q14 9 12 12M15 4Q18 9 15 14M18 2Q22 9 18 16" /></Svg>
          <Svg w={26} h={14} color="#1b1b1b" sw={1.6}><rect x="1" y="1" width="22" height="12" rx="3.500" /><rect x="3.500" y="3.500" width="7" height="7" fill="#1b1b1b" stroke="none" /><path d="M25 4.500V9.500" strokeWidth="2" /></Svg>
        </button>
        <button className="ml-[20px] flex w-[70px] flex-col items-end whitespace-nowrap font-['DejaVu_Sans',sans-serif] text-[14px] leading-[20px]">
          <span dir="rtl">٠٧:٤٩ م</span>
          <span dir="ltr">٢٠٢٦/٠٣/٢٧</span>
        </button>
      </div>
      <div aria-hidden="true" dir="rtl" className="pointer-events-none absolute -top-[20px] left-[844px] font-['DejaVu_Sans',sans-serif] text-[50px] font-bold leading-[60px] text-[#8f8f8f]/25">خمســـات</div>
    </div>
  );
}

export default function App() {
  return (
    <div className="flex h-screen w-full flex-col overflow-hidden bg-[#f3f2f1] font-['Open_Sans','Noto_Sans',sans-serif]">
      <TitleBar />
      <Ribbon />
      <div className="flex min-h-0 flex-1">
        <Rail />
        <ReportCanvas />
        <FiltersStrip />
        <VisualizationsPane />
        <DataPane />
      </div>
      <StatusBar />
      <Taskbar />
    </div>
  );
}
